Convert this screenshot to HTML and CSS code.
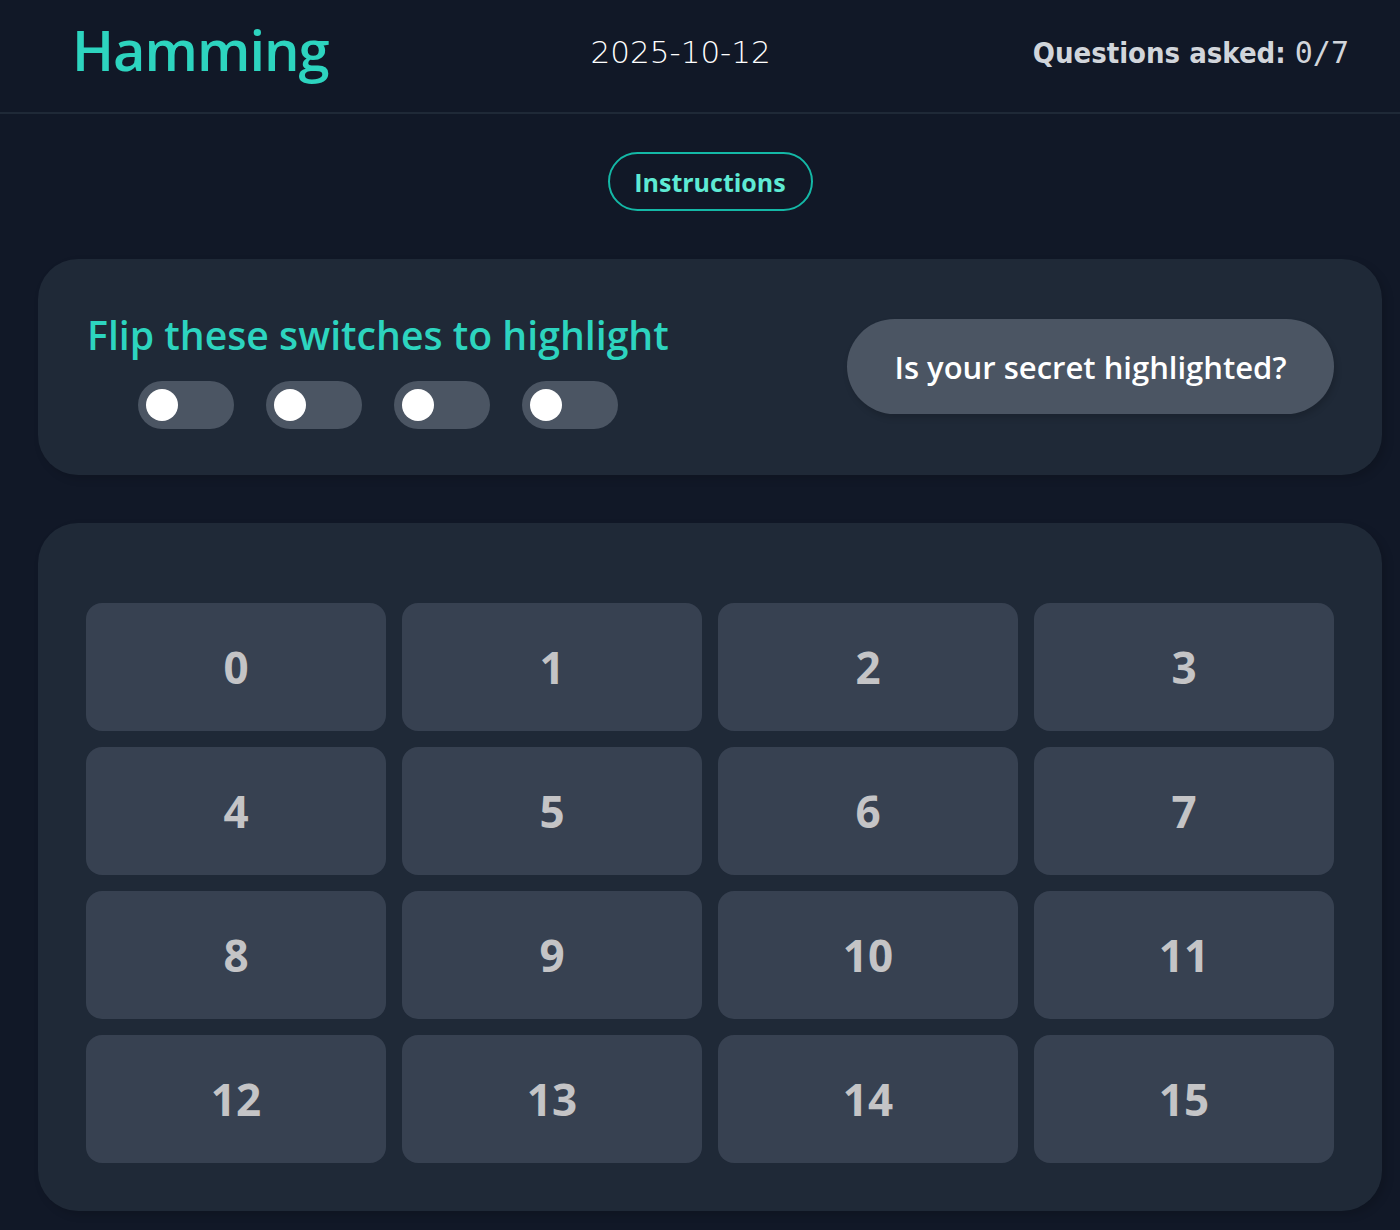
FILE: index.html
```html
<!DOCTYPE html>
<html lang="en">
<head>
<meta charset="utf-8">
<title>Hamming</title>
<link rel="stylesheet" href="styles.css">
</head>
<body>
<header class="topbar">
  <h1 class="brand">Hamming</h1>
  <div class="date">2025-10-12</div>
  <div class="asked">Questions asked: <span class="count">0/7</span></div>
</header>
<main class="main">
  <div class="instr-row">
    <button class="instr-btn">Instructions</button>
  </div>
  <section class="panel switch-panel">
    <div class="switch-group">
      <h2 class="switch-title">Flip these switches to highlight</h2>
      <div class="toggles">
        <span class="toggle"><span class="knob"></span></span>
        <span class="toggle"><span class="knob"></span></span>
        <span class="toggle"><span class="knob"></span></span>
        <span class="toggle"><span class="knob"></span></span>
      </div>
    </div>
    <button class="ask-btn">Is your secret highlighted?</button>
  </section>
  <section class="panel grid-panel">
    <div class="grid">
      <div class="cell">0</div><div class="cell">1</div><div class="cell">2</div><div class="cell">3</div>
      <div class="cell">4</div><div class="cell">5</div><div class="cell">6</div><div class="cell">7</div>
      <div class="cell">8</div><div class="cell">9</div><div class="cell">10</div><div class="cell">11</div>
      <div class="cell">12</div><div class="cell">13</div><div class="cell">14</div><div class="cell">15</div>
    </div>
  </section>
</main>
</body>
</html>
```
FILE: styles.css
```css
* { box-sizing: border-box; }
html, body { margin: 0; padding: 0; }
body {
  background: #111827;
  color: #e5e7eb;
  font-family: "Open Sans", "Noto Sans", sans-serif;
  height: 1230px;
  overflow: hidden;
}
.topbar {
  display: flex;
  align-items: center;
  justify-content: space-between;
  height: 114px;
  padding: 0 51px 14px 72px;
  border-bottom: 2px solid #1f2937;
}
.brand {
  margin: 0;
  font-family: "Open Sans", sans-serif;
  font-size: 56px;
  font-weight: 600;
  color: #2dd4bf;
  letter-spacing: -1px;
}
.date {
  font-family: "DejaVu Sans", sans-serif;
  font-size: 31px;
  color: #ffffff;
  font-weight: 300;
  margin-top: 6px;
}
.asked {
  font-family: "DejaVu Sans Condensed", "DejaVu Sans", sans-serif;
  font-size: 29px;
  color: #d1d5db;
  font-weight: 600;
  margin-top: 6px;
}
.count {
  font-family: "DejaVu Sans Mono", monospace;
  font-weight: 400;
  font-size: 30px;
}
.main {
  padding: 38px 18px 0 38px;
}
.instr-row {
  display: flex;
  justify-content: center;
  margin-bottom: 48px;
}
.instr-btn {
  font-family: "Open Sans", sans-serif;
  background: transparent;
  border: 2px solid #14b8a6;
  color: #5eead4;
  border-radius: 999px;
  width: 205px;
  height: 59px;
  font-size: 25px;
  font-weight: 700;
  padding: 0;
}
.panel {
  background: #1f2937;
  border-radius: 40px;
  box-shadow: 4px 4px 8px rgba(0,0,0,0.15);
}
.switch-panel {
  display: flex;
  align-items: center;
  justify-content: space-between;
  height: 216px;
  padding: 0 48px 0 49px;
  margin-bottom: 48px;
}
.switch-group {
  display: flex;
  flex-direction: column;
  align-items: center;
  gap: 24px;
  margin-top: 8px;
}
.switch-title {
  margin: 0;
  font-size: 39.2px;
  font-weight: 600;
  color: #2dd4bf;
  line-height: 1.1;
}
.toggles {
  display: flex;
  gap: 32px;
}
.toggle {
  display: flex;
  align-items: center;
  width: 96px;
  height: 48px;
  padding: 0 8px;
  border-radius: 24px;
  background: #4b5563;
}
.knob {
  width: 32px;
  height: 32px;
  border-radius: 50%;
  background: #ffffff;
}
.ask-btn {
  font-family: "Open Sans", sans-serif;
  width: 487px;
  height: 95px;
  border: none;
  border-radius: 48px;
  background: #4b5563;
  color: #ffffff;
  font-size: 31px;
  font-weight: 600;
  box-shadow: 2px 4px 6px rgba(0,0,0,0.15);
  margin-top: -1px;
}
.grid-panel {
  height: 688px;
  padding: 80px 48px 48px 48px;
}
.grid {
  display: grid;
  grid-template-columns: repeat(4, 1fr);
  grid-auto-rows: 128px;
  gap: 16px;
}
.cell {
  display: flex;
  align-items: center;
  justify-content: center;
  background: #374151;
  border-radius: 16px;
  color: #c4c4c6;
  font-size: 44px;
  font-weight: 700;
}
```
